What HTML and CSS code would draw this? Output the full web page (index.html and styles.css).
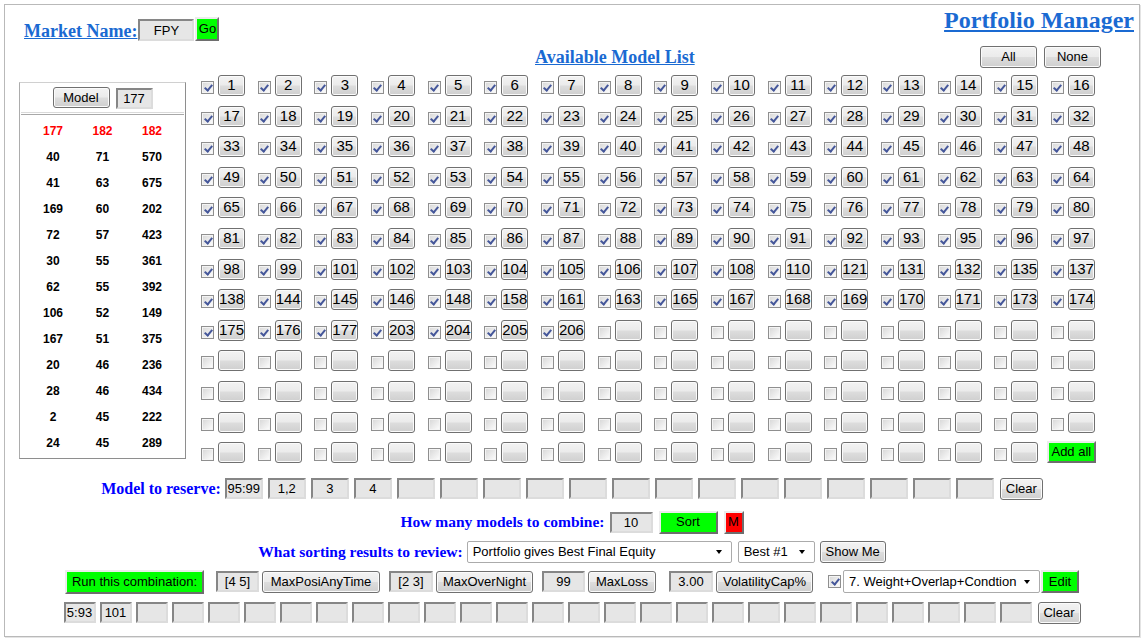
FILE: index.html
```html
<!DOCTYPE html>
<html>
<head>
<meta charset="utf-8">
<title>Portfolio Manager</title>
<link rel="stylesheet" href="styles.css">
</head>
<body>
<div class="frame">
  <div class="header">
    <div class="market">
      <span class="h-link">Market Name:</span>
      <input class="in fpy" type="text" value="FPY">
      <button class="green go">Go</button>
    </div>
    <div class="h-link title">Portfolio Manager</div>
  </div>

  <div class="listhead">
    <span class="h-link avail">Available Model List</span>
    <div class="allnone"><button>All</button><button>None</button></div>
  </div>

  <div class="main">
    <div class="panel">
      <div class="panel-top">
        <button class="model">Model</button>
        <input class="in mid" type="text" value="177">
      </div>
      <div class="panel-data">
        <span class="hot">177</span><span class="hot">182</span><span class="hot">182</span>
        <span>40</span><span>71</span><span>570</span>
        <span>41</span><span>63</span><span>675</span>
        <span>169</span><span>60</span><span>202</span>
        <span>72</span><span>57</span><span>423</span>
        <span>30</span><span>55</span><span>361</span>
        <span>62</span><span>55</span><span>392</span>
        <span>106</span><span>52</span><span>149</span>
        <span>167</span><span>51</span><span>375</span>
        <span>20</span><span>46</span><span>236</span>
        <span>28</span><span>46</span><span>434</span>
        <span>2</span><span>45</span><span>222</span>
        <span>24</span><span>45</span><span>289</span>
      </div>
    </div>

    <div class="grid">
      <span class="c"><i class="k y"></i><button>1</button></span>
      <span class="c"><i class="k y"></i><button>2</button></span>
      <span class="c"><i class="k y"></i><button>3</button></span>
      <span class="c"><i class="k y"></i><button>4</button></span>
      <span class="c"><i class="k y"></i><button>5</button></span>
      <span class="c"><i class="k y"></i><button>6</button></span>
      <span class="c"><i class="k y"></i><button>7</button></span>
      <span class="c"><i class="k y"></i><button>8</button></span>
      <span class="c"><i class="k y"></i><button>9</button></span>
      <span class="c"><i class="k y"></i><button>10</button></span>
      <span class="c"><i class="k y"></i><button>11</button></span>
      <span class="c"><i class="k y"></i><button>12</button></span>
      <span class="c"><i class="k y"></i><button>13</button></span>
      <span class="c"><i class="k y"></i><button>14</button></span>
      <span class="c"><i class="k y"></i><button>15</button></span>
      <span class="c"><i class="k y"></i><button>16</button></span>

      <span class="c"><i class="k y"></i><button>17</button></span>
      <span class="c"><i class="k y"></i><button>18</button></span>
      <span class="c"><i class="k y"></i><button>19</button></span>
      <span class="c"><i class="k y"></i><button>20</button></span>
      <span class="c"><i class="k y"></i><button>21</button></span>
      <span class="c"><i class="k y"></i><button>22</button></span>
      <span class="c"><i class="k y"></i><button>23</button></span>
      <span class="c"><i class="k y"></i><button>24</button></span>
      <span class="c"><i class="k y"></i><button>25</button></span>
      <span class="c"><i class="k y"></i><button>26</button></span>
      <span class="c"><i class="k y"></i><button>27</button></span>
      <span class="c"><i class="k y"></i><button>28</button></span>
      <span class="c"><i class="k y"></i><button>29</button></span>
      <span class="c"><i class="k y"></i><button>30</button></span>
      <span class="c"><i class="k y"></i><button>31</button></span>
      <span class="c"><i class="k y"></i><button>32</button></span>

      <span class="c"><i class="k y"></i><button>33</button></span>
      <span class="c"><i class="k y"></i><button>34</button></span>
      <span class="c"><i class="k y"></i><button>35</button></span>
      <span class="c"><i class="k y"></i><button>36</button></span>
      <span class="c"><i class="k y"></i><button>37</button></span>
      <span class="c"><i class="k y"></i><button>38</button></span>
      <span class="c"><i class="k y"></i><button>39</button></span>
      <span class="c"><i class="k y"></i><button>40</button></span>
      <span class="c"><i class="k y"></i><button>41</button></span>
      <span class="c"><i class="k y"></i><button>42</button></span>
      <span class="c"><i class="k y"></i><button>43</button></span>
      <span class="c"><i class="k y"></i><button>44</button></span>
      <span class="c"><i class="k y"></i><button>45</button></span>
      <span class="c"><i class="k y"></i><button>46</button></span>
      <span class="c"><i class="k y"></i><button>47</button></span>
      <span class="c"><i class="k y"></i><button>48</button></span>

      <span class="c"><i class="k y"></i><button>49</button></span>
      <span class="c"><i class="k y"></i><button>50</button></span>
      <span class="c"><i class="k y"></i><button>51</button></span>
      <span class="c"><i class="k y"></i><button>52</button></span>
      <span class="c"><i class="k y"></i><button>53</button></span>
      <span class="c"><i class="k y"></i><button>54</button></span>
      <span class="c"><i class="k y"></i><button>55</button></span>
      <span class="c"><i class="k y"></i><button>56</button></span>
      <span class="c"><i class="k y"></i><button>57</button></span>
      <span class="c"><i class="k y"></i><button>58</button></span>
      <span class="c"><i class="k y"></i><button>59</button></span>
      <span class="c"><i class="k y"></i><button>60</button></span>
      <span class="c"><i class="k y"></i><button>61</button></span>
      <span class="c"><i class="k y"></i><button>62</button></span>
      <span class="c"><i class="k y"></i><button>63</button></span>
      <span class="c"><i class="k y"></i><button>64</button></span>

      <span class="c"><i class="k y"></i><button>65</button></span>
      <span class="c"><i class="k y"></i><button>66</button></span>
      <span class="c"><i class="k y"></i><button>67</button></span>
      <span class="c"><i class="k y"></i><button>68</button></span>
      <span class="c"><i class="k y"></i><button>69</button></span>
      <span class="c"><i class="k y"></i><button>70</button></span>
      <span class="c"><i class="k y"></i><button>71</button></span>
      <span class="c"><i class="k y"></i><button>72</button></span>
      <span class="c"><i class="k y"></i><button>73</button></span>
      <span class="c"><i class="k y"></i><button>74</button></span>
      <span class="c"><i class="k y"></i><button>75</button></span>
      <span class="c"><i class="k y"></i><button>76</button></span>
      <span class="c"><i class="k y"></i><button>77</button></span>
      <span class="c"><i class="k y"></i><button>78</button></span>
      <span class="c"><i class="k y"></i><button>79</button></span>
      <span class="c"><i class="k y"></i><button>80</button></span>

      <span class="c"><i class="k y"></i><button>81</button></span>
      <span class="c"><i class="k y"></i><button>82</button></span>
      <span class="c"><i class="k y"></i><button>83</button></span>
      <span class="c"><i class="k y"></i><button>84</button></span>
      <span class="c"><i class="k y"></i><button>85</button></span>
      <span class="c"><i class="k y"></i><button>86</button></span>
      <span class="c"><i class="k y"></i><button>87</button></span>
      <span class="c"><i class="k y"></i><button>88</button></span>
      <span class="c"><i class="k y"></i><button>89</button></span>
      <span class="c"><i class="k y"></i><button>90</button></span>
      <span class="c"><i class="k y"></i><button>91</button></span>
      <span class="c"><i class="k y"></i><button>92</button></span>
      <span class="c"><i class="k y"></i><button>93</button></span>
      <span class="c"><i class="k y"></i><button>95</button></span>
      <span class="c"><i class="k y"></i><button>96</button></span>
      <span class="c"><i class="k y"></i><button>97</button></span>

      <span class="c"><i class="k y"></i><button>98</button></span>
      <span class="c"><i class="k y"></i><button>99</button></span>
      <span class="c"><i class="k y"></i><button>101</button></span>
      <span class="c"><i class="k y"></i><button>102</button></span>
      <span class="c"><i class="k y"></i><button>103</button></span>
      <span class="c"><i class="k y"></i><button>104</button></span>
      <span class="c"><i class="k y"></i><button>105</button></span>
      <span class="c"><i class="k y"></i><button>106</button></span>
      <span class="c"><i class="k y"></i><button>107</button></span>
      <span class="c"><i class="k y"></i><button>108</button></span>
      <span class="c"><i class="k y"></i><button>110</button></span>
      <span class="c"><i class="k y"></i><button>121</button></span>
      <span class="c"><i class="k y"></i><button>131</button></span>
      <span class="c"><i class="k y"></i><button>132</button></span>
      <span class="c"><i class="k y"></i><button>135</button></span>
      <span class="c"><i class="k y"></i><button>137</button></span>

      <span class="c"><i class="k y"></i><button>138</button></span>
      <span class="c"><i class="k y"></i><button>144</button></span>
      <span class="c"><i class="k y"></i><button>145</button></span>
      <span class="c"><i class="k y"></i><button>146</button></span>
      <span class="c"><i class="k y"></i><button>148</button></span>
      <span class="c"><i class="k y"></i><button>158</button></span>
      <span class="c"><i class="k y"></i><button>161</button></span>
      <span class="c"><i class="k y"></i><button>163</button></span>
      <span class="c"><i class="k y"></i><button>165</button></span>
      <span class="c"><i class="k y"></i><button>167</button></span>
      <span class="c"><i class="k y"></i><button>168</button></span>
      <span class="c"><i class="k y"></i><button>169</button></span>
      <span class="c"><i class="k y"></i><button>170</button></span>
      <span class="c"><i class="k y"></i><button>171</button></span>
      <span class="c"><i class="k y"></i><button>173</button></span>
      <span class="c"><i class="k y"></i><button>174</button></span>

      <span class="c"><i class="k y"></i><button>175</button></span>
      <span class="c"><i class="k y"></i><button>176</button></span>
      <span class="c"><i class="k y"></i><button>177</button></span>
      <span class="c"><i class="k y"></i><button>203</button></span>
      <span class="c"><i class="k y"></i><button>204</button></span>
      <span class="c"><i class="k y"></i><button>205</button></span>
      <span class="c"><i class="k y"></i><button>206</button></span>
      <span class="c"><i class="k"></i><button></button></span>
      <span class="c"><i class="k"></i><button></button></span>
      <span class="c"><i class="k"></i><button></button></span>
      <span class="c"><i class="k"></i><button></button></span>
      <span class="c"><i class="k"></i><button></button></span>
      <span class="c"><i class="k"></i><button></button></span>
      <span class="c"><i class="k"></i><button></button></span>
      <span class="c"><i class="k"></i><button></button></span>
      <span class="c"><i class="k"></i><button></button></span>

      <span class="c"><i class="k"></i><button></button></span>
      <span class="c"><i class="k"></i><button></button></span>
      <span class="c"><i class="k"></i><button></button></span>
      <span class="c"><i class="k"></i><button></button></span>
      <span class="c"><i class="k"></i><button></button></span>
      <span class="c"><i class="k"></i><button></button></span>
      <span class="c"><i class="k"></i><button></button></span>
      <span class="c"><i class="k"></i><button></button></span>
      <span class="c"><i class="k"></i><button></button></span>
      <span class="c"><i class="k"></i><button></button></span>
      <span class="c"><i class="k"></i><button></button></span>
      <span class="c"><i class="k"></i><button></button></span>
      <span class="c"><i class="k"></i><button></button></span>
      <span class="c"><i class="k"></i><button></button></span>
      <span class="c"><i class="k"></i><button></button></span>
      <span class="c"><i class="k"></i><button></button></span>

      <span class="c"><i class="k"></i><button></button></span>
      <span class="c"><i class="k"></i><button></button></span>
      <span class="c"><i class="k"></i><button></button></span>
      <span class="c"><i class="k"></i><button></button></span>
      <span class="c"><i class="k"></i><button></button></span>
      <span class="c"><i class="k"></i><button></button></span>
      <span class="c"><i class="k"></i><button></button></span>
      <span class="c"><i class="k"></i><button></button></span>
      <span class="c"><i class="k"></i><button></button></span>
      <span class="c"><i class="k"></i><button></button></span>
      <span class="c"><i class="k"></i><button></button></span>
      <span class="c"><i class="k"></i><button></button></span>
      <span class="c"><i class="k"></i><button></button></span>
      <span class="c"><i class="k"></i><button></button></span>
      <span class="c"><i class="k"></i><button></button></span>
      <span class="c"><i class="k"></i><button></button></span>

      <span class="c"><i class="k"></i><button></button></span>
      <span class="c"><i class="k"></i><button></button></span>
      <span class="c"><i class="k"></i><button></button></span>
      <span class="c"><i class="k"></i><button></button></span>
      <span class="c"><i class="k"></i><button></button></span>
      <span class="c"><i class="k"></i><button></button></span>
      <span class="c"><i class="k"></i><button></button></span>
      <span class="c"><i class="k"></i><button></button></span>
      <span class="c"><i class="k"></i><button></button></span>
      <span class="c"><i class="k"></i><button></button></span>
      <span class="c"><i class="k"></i><button></button></span>
      <span class="c"><i class="k"></i><button></button></span>
      <span class="c"><i class="k"></i><button></button></span>
      <span class="c"><i class="k"></i><button></button></span>
      <span class="c"><i class="k"></i><button></button></span>
      <span class="c"><i class="k"></i><button></button></span>

      <span class="c"><i class="k"></i><button></button></span>
      <span class="c"><i class="k"></i><button></button></span>
      <span class="c"><i class="k"></i><button></button></span>
      <span class="c"><i class="k"></i><button></button></span>
      <span class="c"><i class="k"></i><button></button></span>
      <span class="c"><i class="k"></i><button></button></span>
      <span class="c"><i class="k"></i><button></button></span>
      <span class="c"><i class="k"></i><button></button></span>
      <span class="c"><i class="k"></i><button></button></span>
      <span class="c"><i class="k"></i><button></button></span>
      <span class="c"><i class="k"></i><button></button></span>
      <span class="c"><i class="k"></i><button></button></span>
      <span class="c"><i class="k"></i><button></button></span>
      <span class="c"><i class="k"></i><button></button></span>
      <span class="c"><i class="k"></i><button></button></span>
      <span class="c"><button class="green addall">Add all</button></span>
    </div>
  </div>

  <div class="rows">
    <div class="row reserve">
      <span class="lbl">Model to reserve:</span>
      <div class="ins">
        <input class="in" type="text" value="95:99">
        <input class="in" type="text" value="1,2">
        <input class="in" type="text" value="3">
        <input class="in" type="text" value="4">
        <input class="in" type="text" value="">
        <input class="in" type="text" value="">
        <input class="in" type="text" value="">
        <input class="in" type="text" value="">
        <input class="in" type="text" value="">
        <input class="in" type="text" value="">
        <input class="in" type="text" value="">
        <input class="in" type="text" value="">
        <input class="in" type="text" value="">
        <input class="in" type="text" value="">
        <input class="in" type="text" value="">
        <input class="in" type="text" value="">
        <input class="in" type="text" value="">
        <input class="in" type="text" value="">
      </div>
      <button class="clear">Clear</button>
    </div>

    <div class="row combine">
      <span class="lbl small">How many models to combine:</span>
      <input class="in count" type="text" value="10">
      <button class="green sort">Sort</button>
      <button class="green red mbtn">M</button>
    </div>

    <div class="row sorting">
      <span class="lbl small">What sorting results to review:</span>
      <div class="sel sel-main"><span>Portfolio gives Best Final Equity</span></div>
      <div class="sel sel-best"><span>Best #1</span></div>
      <button class="showme">Show Me</button>
    </div>

    <div class="row run">
      <button class="green runbtn">Run this combination:</button>
      <div class="pair p1"><input class="in w43" type="text" value="[4 5]"><button class="b-posi">MaxPosiAnyTime</button></div>
      <div class="pair"><input class="in w44" type="text" value="[2 3]"><button class="b-night">MaxOverNight</button></div>
      <div class="pair"><input class="in w43" type="text" value="99"><button class="b-loss">MaxLoss</button></div>
      <div class="pair p4"><input class="in w44" type="text" value="3.00"><button class="b-vol">VolatilityCap%</button></div>
      <div class="opt">
        <i class="k y"></i>
        <div class="sel sel-mode"><span>7. Weight+Overlap+Condtion</span></div>
        <button class="green edit">Edit</button>
      </div>
    </div>

    <div class="row bottom">
      <div class="ins small-ins">
        <input class="in" type="text" value="5:93">
        <input class="in" type="text" value="101">
        <input class="in" type="text" value="">
        <input class="in" type="text" value="">
        <input class="in" type="text" value="">
        <input class="in" type="text" value="">
        <input class="in" type="text" value="">
        <input class="in" type="text" value="">
        <input class="in" type="text" value="">
        <input class="in" type="text" value="">
        <input class="in" type="text" value="">
        <input class="in" type="text" value="">
        <input class="in" type="text" value="">
        <input class="in" type="text" value="">
        <input class="in" type="text" value="">
        <input class="in" type="text" value="">
        <input class="in" type="text" value="">
        <input class="in" type="text" value="">
        <input class="in" type="text" value="">
        <input class="in" type="text" value="">
        <input class="in" type="text" value="">
        <input class="in" type="text" value="">
        <input class="in" type="text" value="">
        <input class="in" type="text" value="">
        <input class="in" type="text" value="">
        <input class="in" type="text" value="">
        <input class="in" type="text" value="">
      </div>
      <button class="clear">Clear</button>
    </div>
  </div>
</div>
</body>
</html>
```

FILE: styles.css
```css
* { box-sizing: border-box; }
html, body { margin: 0; background: #fff; }
body {
  font-family: "Liberation Sans", Arial, sans-serif;
  font-size: 13px;
  color: #000;
}
button, input { font-family: "Liberation Sans", Arial, sans-serif; font-size: 13px; color: #000; }

.frame {
  margin: 4px;
  width: 1136px;
  height: 633px;
  border: 1px solid #b9b9b9;
  box-shadow: 1px 1px 0 #e4e4e4;
}

/* generic Win7-like push button */
button {
  height: 22px;
  padding: 0;
  border: 1px solid #707070;
  border-radius: 3px;
  background: linear-gradient(#f3f3f3 0%, #ebebeb 48%, #dddddd 52%, #cfcfcf 100%);
  box-shadow: inset 0 0 0 1px #fbfbfb;
  line-height: 18px;
  cursor: default;
}

/* classic flat coloured buttons */
.green {
  background: #00ff00;
  border: 2px solid;
  border-color: #ececec #6e6e6e #6e6e6e #ececec;
  border-radius: 0;
  box-shadow: none;
}
.red { background: #ff0000; }

/* grey text boxes */
.in {
  display: block;
  height: 21px;
  padding: 0;
  background: #e6e6e6;
  border: 2px solid;
  border-color: #868686 #dcdcdc #dcdcdc #868686;
  text-align: center;
  outline: none;
}

/* headings */
.h-link {
  font-family: "Liberation Serif", "Times New Roman", serif;
  font-weight: bold;
  color: #1a6ad2;
  text-decoration: underline;
}

.header {
  display: flex;
  justify-content: space-between;
  align-items: flex-start;
  height: 41px;
}
.market {
  display: flex;
  align-items: flex-end;
  margin: 12px 0 0 19px;
}
.market .h-link { font-size: 18px; line-height: 20px; margin-right: 1px; }
.fpy { width: 56px; height: 22px; }
.go { width: 24px; height: 24px; margin-left: 1px; }
.title { font-size: 24px; line-height: 28px; margin: 1px 5px 0 0; }

.listhead {
  display: flex;
  align-items: center;
  height: 22px;
}
.avail { margin-left: 530px; font-size: 18px; line-height: 22px; }
.allnone { margin-left: auto; margin-right: 38px; display: flex; gap: 7px; }
.allnone button { width: 57px; height: 22px; }

/* main area */
.main {
  display: flex;
  align-items: flex-start;
  margin-top: 7px;
}
.panel {
  width: 167px;
  height: 377px;
  margin: 7px 0 0 14px;
  padding: 0 1px;
  border: 1px solid;
  border-color: #d0d0d0 #8e8e8e #8e8e8e #acacac;
}
.panel-top {
  height: 30px;
  display: flex;
  justify-content: center;
  align-items: center;
  gap: 6px;
  border-bottom: 1px solid #dadada;
}
.model { width: 57px; height: 21px; }
.mid { width: 37px; height: 21px; margin-top: 2px; }
.panel-data {
  margin-top: 1px;
  padding-top: 3px;
  border-top: 1px solid #a8a8a8;
  display: grid;
  grid-template-columns: repeat(3, 49.5px);
  grid-auto-rows: 26px;
  justify-content: center;
  align-items: center;
  text-align: center;
  font-weight: bold;
  font-size: 12px;
}
.hot { color: #ff0000; }

.grid {
  display: grid;
  grid-template-columns: repeat(16, 56.67px);
  grid-template-rows: repeat(13, 30.6px);
  margin-left: 15px;
}
.c {
  display: flex;
  align-items: flex-end;
  gap: 4px;
  height: 21px;
}
.c button {
  width: 27px;
  height: 21px;
  font-size: 15px;
  line-height: 18px;
  padding: 0 0 1px;
}
.c .addall {
  width: 49px;
  height: 22px;
  margin-left: -4px;
  font-size: 13px;
  padding: 0;
}

/* checkbox */
.k {
  display: block;
  flex: none;
  width: 13px;
  height: 13px;
  margin-bottom: 2px;
  border: 1px solid #8f8f8f;
  background: linear-gradient(135deg, #d6d6d6 0%, #f2f2f2 70%, #ffffff 100%);
  box-shadow: inset 0 0 0 1px #f4f4f4;
}
.k.y::after {
  content: "";
  display: block;
  width: 3px;
  height: 6px;
  margin: 1px 0 0 3.5px;
  border: solid #45579a;
  border-width: 0 2px 2px 0;
  transform: rotate(40deg);
}

/* lower rows */
.rows { margin-top: 5px; }
.row {
  display: flex;
  justify-content: center;
  align-items: center;
}
.lbl {
  font-family: "Liberation Serif", "Times New Roman", serif;
  font-weight: bold;
  font-size: 16px;
  color: #0000ff;
}
.lbl.small { font-size: 15.5px; }
.ins { display: flex; gap: 5px; }
.ins .in { width: 38px; }
.clear { width: 43px; height: 22px; }

.reserve { height: 22px; }
.reserve .lbl { margin-right: 4px; }
.reserve .clear { margin-left: 6px; }

.combine { height: 23px; margin-top: 11px; }
.combine .lbl { margin-right: 5px; }
.count { width: 43px; }
.sort { width: 59px; height: 23px; margin-left: 6px; }
.mbtn { width: 20px; height: 23px; margin-left: 6px; }

.sorting { height: 22px; margin-top: 7px; }
.sorting .lbl { margin-right: 4px; }
.sel {
  display: flex;
  align-items: center;
  justify-content: space-between;
  height: 22px;
  padding: 0 9px 0 5px;
  background: #fff;
  border: 1px solid #ababab;
  border-radius: 2px;
  white-space: nowrap;
}
.sel::after {
  content: "";
  border-left: 3.5px solid transparent;
  border-right: 3.5px solid transparent;
  border-top: 4px solid #000;
}
.sel-main { width: 265px; }
.sel-best { width: 77px; margin-left: 6px; }
.showme { width: 66px; margin-left: 5px; }

.run { height: 24px; margin-top: 7px; gap: 9px; }
.runbtn { width: 139px; height: 24px; }
.pair { display: flex; align-items: center; gap: 3px; }
.p1 { margin-left: 3px; }
.p4 { margin-left: 4px; }
.w43 { width: 43px; }
.w44 { width: 44px; }
.b-posi { width: 118px; }
.b-night { width: 97px; }
.b-loss { width: 68px; }
.b-vol { width: 97px; }
.opt { display: flex; align-items: center; margin-left: 6px; }
.opt .k { margin-bottom: 0; }
.sel-mode { width: 197px; height: 23px; margin: 0 1px 0 2px; }
.edit { width: 38px; height: 23px; }

.bottom { height: 22px; margin-top: 8px; }
.small-ins { gap: 4px; }
.small-ins .in { width: 32px; }
.bottom .clear { margin-left: 6px; }
```
